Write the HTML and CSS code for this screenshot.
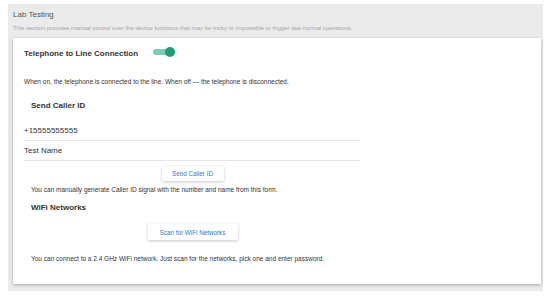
FILE: index.html
```
<!DOCTYPE html>
<html>
<head>
<meta charset="utf-8">
<link rel="stylesheet" href="styles.css">
</head>
<body>
<section class="panel">
  <h1 class="title">Lab Testing</h1>
  <p class="desc">This section provides manual control over the device functions that may be tricky or impossible to trigger due normal operations.</p>
  <div class="card">
    <div class="row">
      <h2 class="heading">Telephone to Line Connection</h2>
      <span class="toggle"><span class="track"></span><span class="knob"></span></span>
    </div>
    <p class="text first">When on, the telephone is connected to the line. When off — the telephone is disconnected.</p>
    <h3 class="sub caller">Send Caller ID</h3>
    <div class="form">
      <input class="field f1" type="text" value="+15555555555">
      <input class="field" type="text" value="Test Name">
      <button class="btn b1">Send Caller ID</button>
    </div>
    <p class="text indent manual">You can manually generate Caller ID signal with the number and name from this form.</p>
    <h3 class="sub wifi">WiFi Networks</h3>
    <div class="form">
      <button class="btn b2">Scan for WiFi Networks</button>
    </div>
    <p class="text indent connect">You can connect to a 2.4 GHz WiFi network. Just scan for the networks, pick one and enter password.</p>
  </div>
</section>
</body>
</html>
```
FILE: styles.css
```
* { box-sizing: border-box; }
body {
  margin: 0;
  background: #fff;
  font-family: "Liberation Sans", Arial, sans-serif;
  color: #333;
}
.panel {
  margin: 4px 0 0 8px;
  width: 535px;
  background: #ebebeb;
  padding: 6px 2px 7px 5px;
}
.title {
  margin: 0;
  font-size: 8px;
  line-height: 9px;
  font-weight: normal;
  color: #555;
}
.desc {
  margin: 6px 0 0;
  font-size: 6px;
  line-height: 7px;
  color: #a5a5a5;
}
.card {
  margin-top: 6px;
  background: #fff;
  padding: 6px 11px 21px;
  box-shadow: 0 1px 3px rgba(0,0,0,0.28);
}
.row {
  display: flex;
  align-items: center;
  height: 20px;
}
.heading {
  margin: 0;
  font-size: 8px;
  line-height: 10px;
  font-weight: bold;
  color: #333;
}
.toggle {
  position: relative;
  width: 22px;
  height: 10px;
  margin-left: 15px;
  margin-top: -4px;
}
.track {
  position: absolute;
  left: 0;
  top: 2px;
  width: 20px;
  height: 6px;
  border-radius: 3px;
  background: #7ccfb3;
}
.knob {
  position: absolute;
  left: 12px;
  top: 0;
  width: 10px;
  height: 10px;
  border-radius: 50%;
  background: #1e9d78;
}
.text {
  margin: 0;
  font-size: 6.5px;
  line-height: 8px;
  color: #333;
}
.first { margin-top: 14px; }
.indent { padding-left: 7px; }
.sub {
  margin: 0;
  padding-left: 7px;
  font-size: 8px;
  line-height: 10px;
  font-weight: bold;
  color: #333;
}
.caller { margin-top: 15px; }
.form {
  width: 337px;
  display: flex;
  flex-direction: column;
  align-items: center;
}
.field {
  display: block;
  width: 100%;
  height: 20px;
  margin: 0;
  padding: 0;
  border: none;
  border-bottom: 1px solid #e6e6e6;
  outline: none;
  font-family: "Liberation Sans", Arial, sans-serif;
  font-size: 8px;
  color: #333;
  background: transparent;
}
.f1 { margin-top: 10px; }
.btn {
  margin: 0;
  padding: 0;
  border: none;
  background: #fff;
  box-shadow: 0 1px 3px rgba(0,0,0,0.22);
  font-family: "Liberation Sans", Arial, sans-serif;
  font-size: 6.3px;
  color: #2f78d2;
}
.b1 {
  margin-top: 5px;
  width: 62px;
  height: 15px;
}
.b2 {
  margin-top: 11px;
  width: 90px;
  height: 16px;
}
.manual { margin-top: 5px; }
.wifi { margin-top: 9px; }
.connect { margin-top: 15px; }
```
